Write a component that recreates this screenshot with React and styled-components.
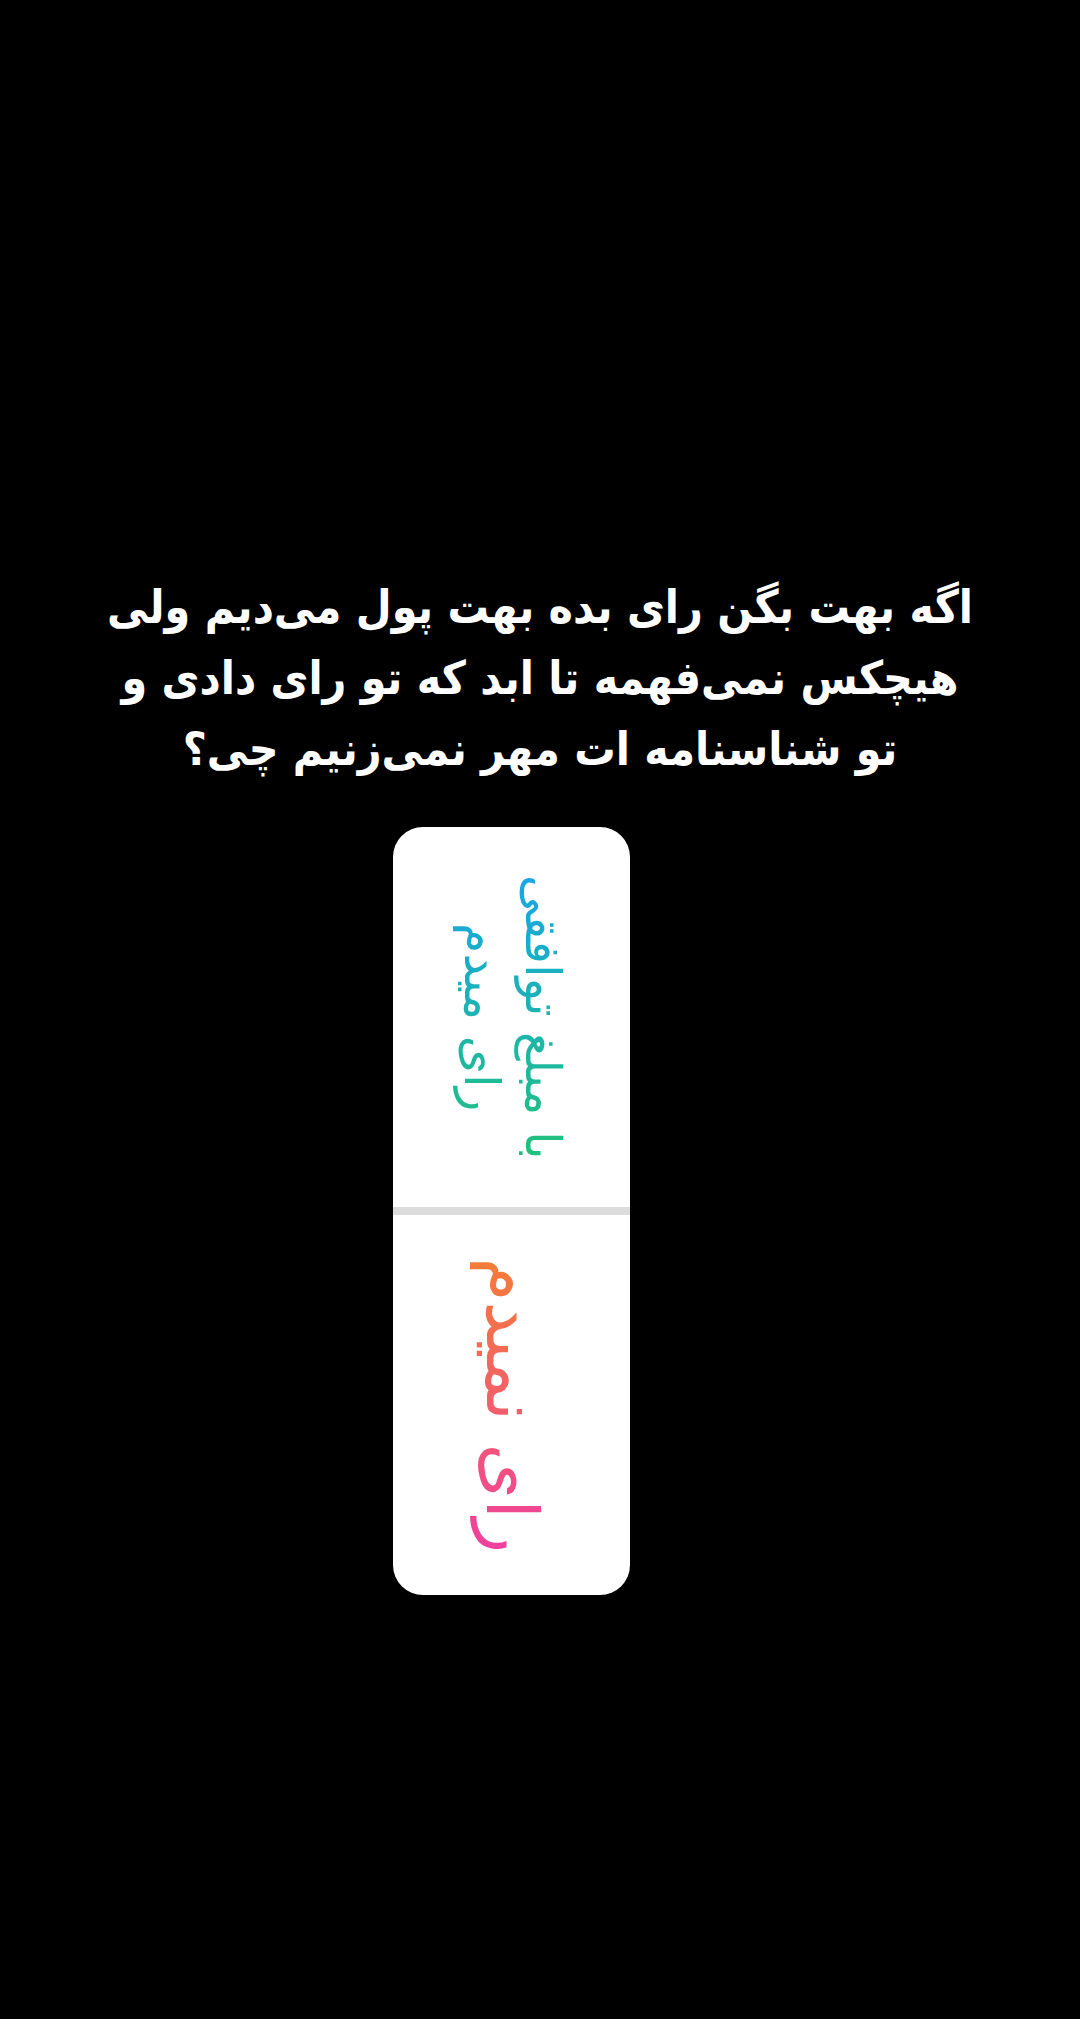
import React from 'react'
import styled, { createGlobalStyle } from 'styled-components'

const GlobalStyle = createGlobalStyle`
  html, body {
    margin: 0;
    padding: 0;
    background: #000;
  }
`

const App = () => {
  return (
    <Page>
      <GlobalStyle />
      <Question>
        اگه بهت بگن رای بده بهت پول می‌دیم ولی
        <br />
        هیچکس نمی‌فهمه تا ابد که تو رای دادی و
        <br />
        تو شناسنامه ات مهر نمی‌زنیم چی؟
      </Question>

      <PollCard>
        <Option>
          <Label size={49} from="#17a6e6" to="#22c17a">
            با مبلغ توافقی
            <br />
            رای میدم
          </Label>
        </Option>
        <Divider />
        <Option>
          <Label size={71} from="#f57d36" to="#f03fa0">
            رای نمیدم
          </Label>
        </Option>
      </PollCard>
    </Page>
  )
}

export default App

const Page = styled.div`
  min-height: 2019px;
  background: #000;
  display: flex;
  flex-direction: column;
  align-items: center;
  padding-top: 572px;
  box-sizing: border-box;
`

const Question = styled.p`
  margin: 0;
  direction: rtl;
  text-align: center;
  color: #fff;
  font-family: 'DejaVu Sans Condensed', 'DejaVu Sans', sans-serif;
  font-weight: bold;
  font-size: 46px;
  line-height: 71px;
  white-space: nowrap;
`

const PollCard = styled.div`
  margin-top: 42px;
  margin-right: 58px;
  width: 237px;
  background: #fff;
  border-radius: 30px;
  overflow: hidden;
  display: flex;
  flex-direction: column;
`

const Option = styled.div`
  height: 380px;
  display: flex;
  align-items: center;
  justify-content: center;
`

const Divider = styled.div`
  height: 8px;
  background: #dcdcdc;
`

const Label = styled.div`
  direction: rtl;
  text-align: center;
  white-space: nowrap;
  font-family: 'DejaVu Sans', sans-serif;
  font-size: ${p => p.size}px;
  line-height: 1.25;
  transform: rotate(90deg);
  background: linear-gradient(to right, ${p => p.from}, ${p => p.to});
  -webkit-background-clip: text;
  background-clip: text;
  color: transparent;
`
